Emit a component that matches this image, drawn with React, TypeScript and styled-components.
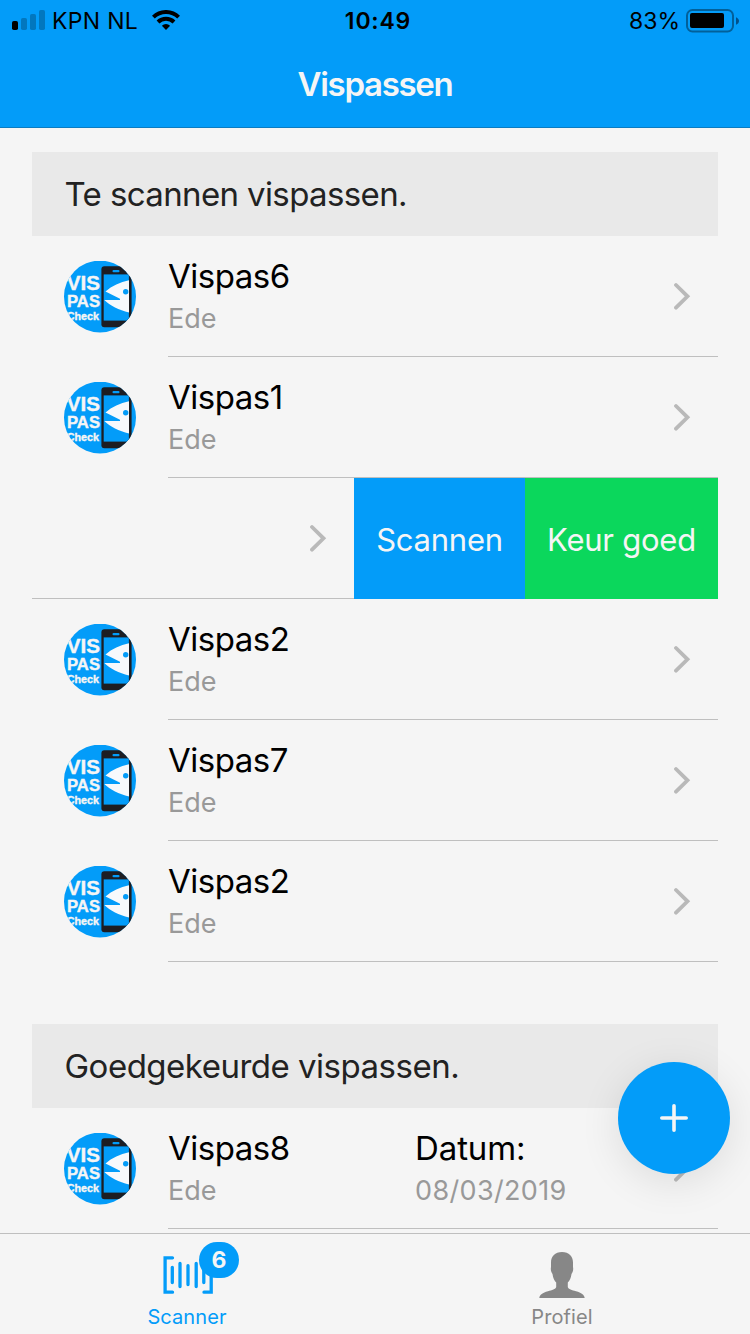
import React from "react";
import styled, { createGlobalStyle } from "styled-components";

const BLUE = "#039cf9";
const GREEN = "#0bd75c";
const PAPER = "#f5f5f5";
const LINE = "#bfbfbf";

const GlobalStyle = createGlobalStyle`
  * { box-sizing: border-box; }
  body {
    margin: 0;
    background: ${PAPER};
    font-family: Inter, "Liberation Sans", sans-serif;
    overflow: hidden;
  }
`;

const Screen = styled.div`
  position: relative;
  width: 750px;
  height: 1334px;
  display: flex;
  flex-direction: column;
  background: ${PAPER};
  overflow: hidden;
`;

const TopBar = styled.header`
  flex: none;
  height: 128px;
  background: ${BLUE};
  border-bottom: 1px solid #0b7cc2;
  color: #000;
`;

const StatusBar = styled.div`
  height: 40px;
  display: grid;
  grid-template-columns: 1fr auto 1fr;
  align-items: center;
  padding: 1px 11px 0 12px;
`;

const StatusGroup = styled.div<{ $end?: boolean }>`
  display: flex;
  align-items: center;
  justify-content: ${(p) => (p.$end ? "flex-end" : "flex-start")};

  svg {
    flex: none;
    margin-top: ${(p) => (p.$end ? "0" : "-1px")};
  }
`;

const StatusText = styled.span<{ $spacing?: string }>`
  font-size: 23px;
  line-height: 28px;
  letter-spacing: ${(p) => p.$spacing ?? "0"};
  white-space: nowrap;
`;

const Carrier = styled(StatusText)`
  margin: 0 13px 0 7px;
`;

const BatteryLevel = styled(StatusText)`
  margin-right: 6px;
`;

const Clock = styled(StatusText)`
  font-weight: 600;
  padding-left: 5px;
`;

const Title = styled.h1`
  margin: 0;
  height: 87px;
  line-height: 89px;
  text-align: center;
  font-size: 33px;
  font-weight: 600;
  letter-spacing: -1.3px;
  color: ${PAPER};
`;

const Content = styled.main`
  flex: 1;
  min-height: 0;
  overflow: hidden;
  padding: 24px 32px 0;
`;

const Section = styled.section`
  margin-bottom: 62px;
`;

const SectionTitle = styled.h2<{ $spacing: string }>`
  margin: 0;
  height: 84px;
  padding-left: 32.5px;
  line-height: 84px;
  background: #e9e9e9;
  color: #222;
  font-size: 33px;
  font-weight: 400;
  letter-spacing: ${(p) => p.$spacing};
  white-space: nowrap;
`;

const Row = styled.div`
  height: 121px;
  display: flex;
  padding-left: 32px;
`;

const RowLogo = styled.div`
  width: 104px;
  padding-top: 25px;
`;

const RowBody = styled.div`
  flex: 1;
  display: flex;
  align-items: center;
  border-bottom: 1px solid ${LINE};
  padding-right: 27px;
`;

const TextColumn = styled.div<{ $wide?: boolean }>`
  width: ${(p) => (p.$wide ? "247px" : "auto")};
  flex: ${(p) => (p.$wide ? "none" : "1")};
  padding-top: 2px;
`;

const Primary = styled.div<{ $spacing?: string }>`
  font-size: 33px;
  line-height: 43px;
  letter-spacing: ${(p) => p.$spacing ?? "-0.5px"};
  color: #000;
`;

const Secondary = styled.div<{ $spacing?: string }>`
  font-size: 27px;
  line-height: 41px;
  letter-spacing: ${(p) => p.$spacing ?? "0"};
  color: #999;
`;

const SwipedRow = styled.div`
  height: 121px;
  display: flex;
`;

const SwipedBody = styled.div`
  flex: 1;
  display: flex;
  align-items: center;
  justify-content: flex-end;
  padding-right: 27px;
  border-bottom: 1px solid ${LINE};
`;

const SwipeAction = styled.button<{ $color: string; $width: number }>`
  width: ${(p) => p.$width}px;
  border: 0;
  padding: 1px 0 0;
  background: ${(p) => p.$color};
  color: ${PAPER};
  font: 400 31px Inter, "Liberation Sans", sans-serif;
  letter-spacing: -0.25px;
  white-space: nowrap;
`;

const AddButton = styled.button`
  position: absolute;
  left: 618px;
  top: 1062px;
  width: 112px;
  height: 112px;
  border: 0;
  padding: 0;
  border-radius: 50%;
  display: grid;
  place-items: center;
  background: ${BLUE};
  box-shadow: 0 8px 40px rgba(0, 0, 0, 0.1);
`;

const TabBar = styled.nav`
  flex: none;
  height: 101px;
  display: grid;
  grid-template-columns: 1fr 1fr;
  border-top: 1px solid ${LINE};
  background: ${PAPER};
`;

const Tab = styled.div<{ $active?: boolean }>`
  display: flex;
  flex-direction: column;
  align-items: center;
  padding: 17px 1px 0 0;
  color: ${(p) => (p.$active ? BLUE : "#878787")};
`;

const TabIcon = styled.div`
  position: relative;
  height: 48px;
`;

const TabLabel = styled.span`
  font-size: 20px;
  line-height: 37px;
  letter-spacing: 0.1px;
`;

const Badge = styled.span`
  position: absolute;
  left: 37px;
  top: -9px;
  width: 40px;
  height: 36px;
  border-radius: 18px;
  background: ${BLUE};
  color: ${PAPER};
  font-size: 23px;
  font-weight: 700;
  line-height: 36px;
  text-align: center;
`;

const BarcodeSvg = styled.svg`
  margin: 5px -1px 0 1px;
`;

const PersonSvg = styled.svg`
  margin-top: 1px;
`;

const SignalIcon = () => (
  <svg width="33" height="20" viewBox="0 0 33 20">
    <rect x="0" y="11" width="6" height="9" rx="1.8" fill="#000" />
    <g fill="#0277be">
      <rect x="9" y="8" width="6" height="12" rx="1.8" />
      <rect x="18" y="4" width="6" height="16" rx="1.8" />
      <rect x="27" y="0" width="6" height="20" rx="1.8" />
    </g>
  </svg>
);

const WifiIcon = () => (
  <svg width="29" height="20" viewBox="-1 0 29 20">
    <g fill="none" stroke="#000" strokeWidth="4">
      <path d="M1.4 7.1a18.1 18.1 0 0 1 25.2 0" />
      <path d="M6 12a11.6 11.6 0 0 1 16 0" />
    </g>
    <path d="M14 20l-4.1-4.3a5.9 5.9 0 0 1 8.2 0z" />
  </svg>
);

const BatteryIcon = () => (
  <svg width="53" height="24" viewBox="0 0 53 24">
    <rect x="1" y="1" width="46" height="21.5" rx="5.5" fill="none" stroke="#02609a" strokeWidth="2" />
    <rect x="4" y="4" width="34" height="15" rx="2" />
    <path d="M50 8.2c4 1.6 4 6 0 7.6z" fill="#02508a" />
  </svg>
);

const Chevron = () => (
  <svg width="17" height="28" viewBox="0 0 17 28">
    <path d="M2 3L13.500 14.300 2 25.700" fill="none" stroke="#b9b9b9" strokeWidth="3.800" strokeLinecap="round" />
  </svg>
);

const VispasLogo = ({ id }: { id: string }) => (
  <svg width="72" height="72" viewBox="0 0 72 72" display="block">
    <clipPath id={id}>
      <circle cx="36" cy="35.6" r="36" />
    </clipPath>
    <g clipPath={`url(#${id})`}>
      <rect width="72" height="72" fill={BLUE} />
      <rect x="37.4" y="5.300" width="30.200" height="61" rx="3" fill="#1d1d22" />
      <rect x="39.700" y="13.400" width="25.200" height="46.200" fill={BLUE} />
      <rect x="48.500" y="9" width="7" height="2.200" rx="1" fill={BLUE} />
      <path d="M65 19.300C56 21.300 48 25 41.500 30.400L56 37.700V39H40.300C46 44.500 55 49 65 51.600z" fill="#f7f9fc" />
      <circle cx="61.700" cy="30.700" r="2.700" fill={BLUE} />
      <g fill={PAPER} stroke={PAPER} strokeWidth="0.4" fontFamily="Liberation Sans, sans-serif" fontWeight="700">
        <text x="2.800" y="29.200" fontSize="20.500" textLength="33.200" lengthAdjust="spacingAndGlyphs">VIS</text>
        <text x="3" y="46.300" fontSize="17" textLength="33" lengthAdjust="spacingAndGlyphs">PAS</text>
        <text x="2.800" y="58.900" fontSize="11.500" textLength="32.200" lengthAdjust="spacingAndGlyphs">Check</text>
      </g>
    </g>
  </svg>
);

const BarcodeIcon = () => (
  <BarcodeSvg width="50" height="38" viewBox="0 0 50 38" fill="none" stroke={BLUE} strokeWidth="3.3" strokeLinecap="round">
    <path d="M9.500 1.800H2.100V36.200H9.500M41 1.800H48.200V36.200H41" />
    <path d="M9.300 11.300V26.500M17 7.500V30.500M25 9.700V28.500M33.200 7.500V30.500M40.800 11.300V26.500" />
  </BarcodeSvg>
);

const PersonIcon = () => (
  <PersonSvg width="46" height="46" viewBox="0 0 46 46">
    <path
      fill="#878787"
      d="M23 0C16 0 12 4.500 12 10.500V15C11.500 18 12 20 13.500 22C14 26 15.300 28.500 17.200 30.500V35C16.700 37.500 13 38 9 39.200C3.500 40.800 .8 42.500 .3 46H45.700C45.200 42.500 42.500 40.800 37 39.200C33 38 29.300 37.500 28.800 35V30.500C30.700 28.500 32 26 32.500 22C34 20 34.500 18 34 15V10.500C34 4.500 30 0 23 0z"
    />
  </PersonSvg>
);

const PlusIcon = () => (
  <svg width="28" height="28" viewBox="0 0 28 28" fill="none" stroke={PAPER} strokeWidth="3.600" strokeLinecap="round">
    <path d="M14 1.800V26.200M1.800 14H26.200" />
  </svg>
);

type Pass = { id: string; name: string; place: string; date?: string };

const PassRow = ({ id, name, place, date }: Pass) => (
  <Row>
    <RowLogo>
      <VispasLogo id={id} />
    </RowLogo>
    <RowBody>
      <TextColumn $wide={!!date}>
        <Primary>{name}</Primary>
        <Secondary>{place}</Secondary>
      </TextColumn>
      {date && (
        <TextColumn>
          <Primary $spacing="-0.1px">Datum:</Primary>
          <Secondary $spacing="0.35px">{date}</Secondary>
        </TextColumn>
      )}
      <Chevron />
    </RowBody>
  </Row>
);

const beforeSwiped: Pass[] = [
  { id: "a", name: "Vispas6", place: "Ede" },
  { id: "b", name: "Vispas1", place: "Ede" },
];

const afterSwiped: Pass[] = [
  { id: "c", name: "Vispas2", place: "Ede" },
  { id: "d", name: "Vispas7", place: "Ede" },
  { id: "e", name: "Vispas2", place: "Ede" },
];

export default function App() {
  return (
    <Screen>
      <GlobalStyle />
      <TopBar>
        <StatusBar>
          <StatusGroup>
            <SignalIcon />
            <Carrier $spacing="0.3px">KPN NL</Carrier>
            <WifiIcon />
          </StatusGroup>
          <Clock $spacing="0.8px">10:49</Clock>
          <StatusGroup $end>
            <BatteryLevel>83%</BatteryLevel>
            <BatteryIcon />
          </StatusGroup>
        </StatusBar>
        <Title>Vispassen</Title>
      </TopBar>
      <Content>
        <Section>
          <SectionTitle $spacing="-0.62px">Te scannen vispassen.</SectionTitle>
          {beforeSwiped.map((p) => (
            <PassRow key={p.id} {...p} />
          ))}
          <SwipedRow>
            <SwipedBody>
              <Chevron />
            </SwipedBody>
            <SwipeAction $color={BLUE} $width={171}>Scannen</SwipeAction>
            <SwipeAction $color={GREEN} $width={193}>Keur goed</SwipeAction>
          </SwipedRow>
          {afterSwiped.map((p) => (
            <PassRow key={p.id} {...p} />
          ))}
        </Section>
        <Section>
          <SectionTitle $spacing="-0.5px">Goedgekeurde vispassen.</SectionTitle>
          <PassRow id="f" name="Vispas8" place="Ede" date="08/03/2019" />
        </Section>
      </Content>
      <TabBar>
        <Tab $active>
          <TabIcon>
            <BarcodeIcon />
            <Badge>6</Badge>
          </TabIcon>
          <TabLabel>Scanner</TabLabel>
        </Tab>
        <Tab>
          <TabIcon>
            <PersonIcon />
          </TabIcon>
          <TabLabel>Profiel</TabLabel>
        </Tab>
      </TabBar>
      <AddButton aria-label="Toevoegen">
        <PlusIcon />
      </AddButton>
    </Screen>
  );
}
